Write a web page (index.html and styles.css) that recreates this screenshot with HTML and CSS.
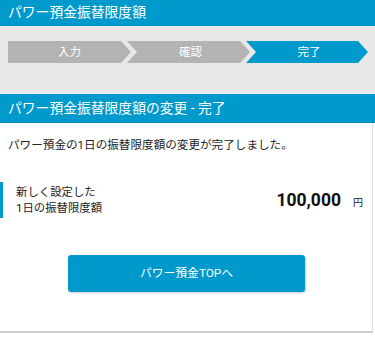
FILE: index.html
```html
<!DOCTYPE html>
<html lang="ja">
<head>
<meta charset="utf-8">
<title>パワー預金振替限度額</title>
<link rel="stylesheet" href="styles.css">
</head>
<body>
<header class="page-header">パワー預金振替限度額</header>
<div class="steps-area">
  <ol class="steps">
    <li class="step step-first">入力</li>
    <li class="step">確認</li>
    <li class="step step-current">完了</li>
  </ol>
</div>
<h2 class="section-header">パワー預金振替限度額の変更 - 完了</h2>
<main class="content">
  <p class="message">パワー預金の1日の振替限度額の変更が完了しました。</p>
  <div class="info-row">
    <div class="info-label">新しく設定した<br>1日の振替限度額</div>
    <div class="info-value"><span class="amount">100,000</span><span class="unit">円</span></div>
  </div>
  <div class="btn-wrap">
    <a class="btn" href="#">パワー預金TOPへ</a>
  </div>
</main>
</body>
</html>
```
FILE: styles.css
```css
html, body {
  margin: 0;
  padding: 0;
  background: #ffffff;
}
body {
  width: 375px;
  font-family: "Roboto", "Noto Sans CJK JP", sans-serif;
  color: #222222;
}
.page-header {
  height: 26px;
  line-height: 25px;
  background: #0099cc;
  color: #ffffff;
  font-size: 13.8px;
  padding-left: 8px;
}
.steps-area {
  background: #e8e8e8;
  height: 52px;
  padding-top: 15px;
  border-bottom: 1px solid #f2f2f2;
}
.steps {
  list-style: none;
  margin: 0;
  padding: 0 0 0 8px;
  display: flex;
}
.step {
  width: 123px;
  height: 22px;
  line-height: 22px;
  text-align: center;
  color: #ffffff;
  font-size: 11.5px;
  background: #b3b3b3;
  margin-left: -4px;
  clip-path: polygon(0 0, calc(100% - 10px) 0, 100% 50%, calc(100% - 10px) 100%, 0 100%, 10px 50%);
  padding-left: 4px;
  box-sizing: border-box;
}
.step-first {
  margin-left: 0;
  padding-left: 0;
  clip-path: polygon(0 0, calc(100% - 10px) 0, 100% 50%, calc(100% - 10px) 100%, 0 100%);
}
.step-current {
  background: #0099cc;
  width: 122px;
}
.section-header {
  margin: 0;
  height: 28px;
  line-height: 28px;
  background: #0099cc;
  border-bottom: 1px solid #0086b5;
  color: #ffffff;
  font-size: 13.8px;
  font-weight: normal;
  padding-left: 8px;
}
.content {
  width: 373px;
  height: 210px;
  border-right: 1px solid #dddddd;
  border-bottom: 2px solid #cccccc;
  padding-top: 13px;
  box-sizing: border-box;
}
.message {
  margin: 0;
  padding-left: 8px;
  font-size: 11.6px;
  line-height: 18px;
}
.info-row {
  margin-top: 28px;
  height: 36px;
  border-left: 3px solid #0099cc;
  display: flex;
  align-items: center;
  justify-content: space-between;
  padding: 0 9px 0 13px;
}
.info-label {
  font-size: 11.4px;
  line-height: 16px;
}
.info-value {
  display: flex;
  align-items: baseline;
}
.amount {
  font-size: 17.5px;
  font-weight: bold;
  color: #111111;
}
.unit {
  font-size: 10px;
  margin-left: 12px;
}
.btn-wrap {
  margin-top: 37px;
  display: flex;
  justify-content: center;
  padding-left: 1px;
}
.btn {
  display: block;
  width: 237px;
  height: 37px;
  line-height: 37px;
  text-align: center;
  background: #0099cc;
  color: #ffffff;
  text-decoration: none;
  font-size: 11.8px;
  border-radius: 3px;
  box-shadow: 1px 1px 2px rgba(0, 0, 0, 0.2);
}
```
